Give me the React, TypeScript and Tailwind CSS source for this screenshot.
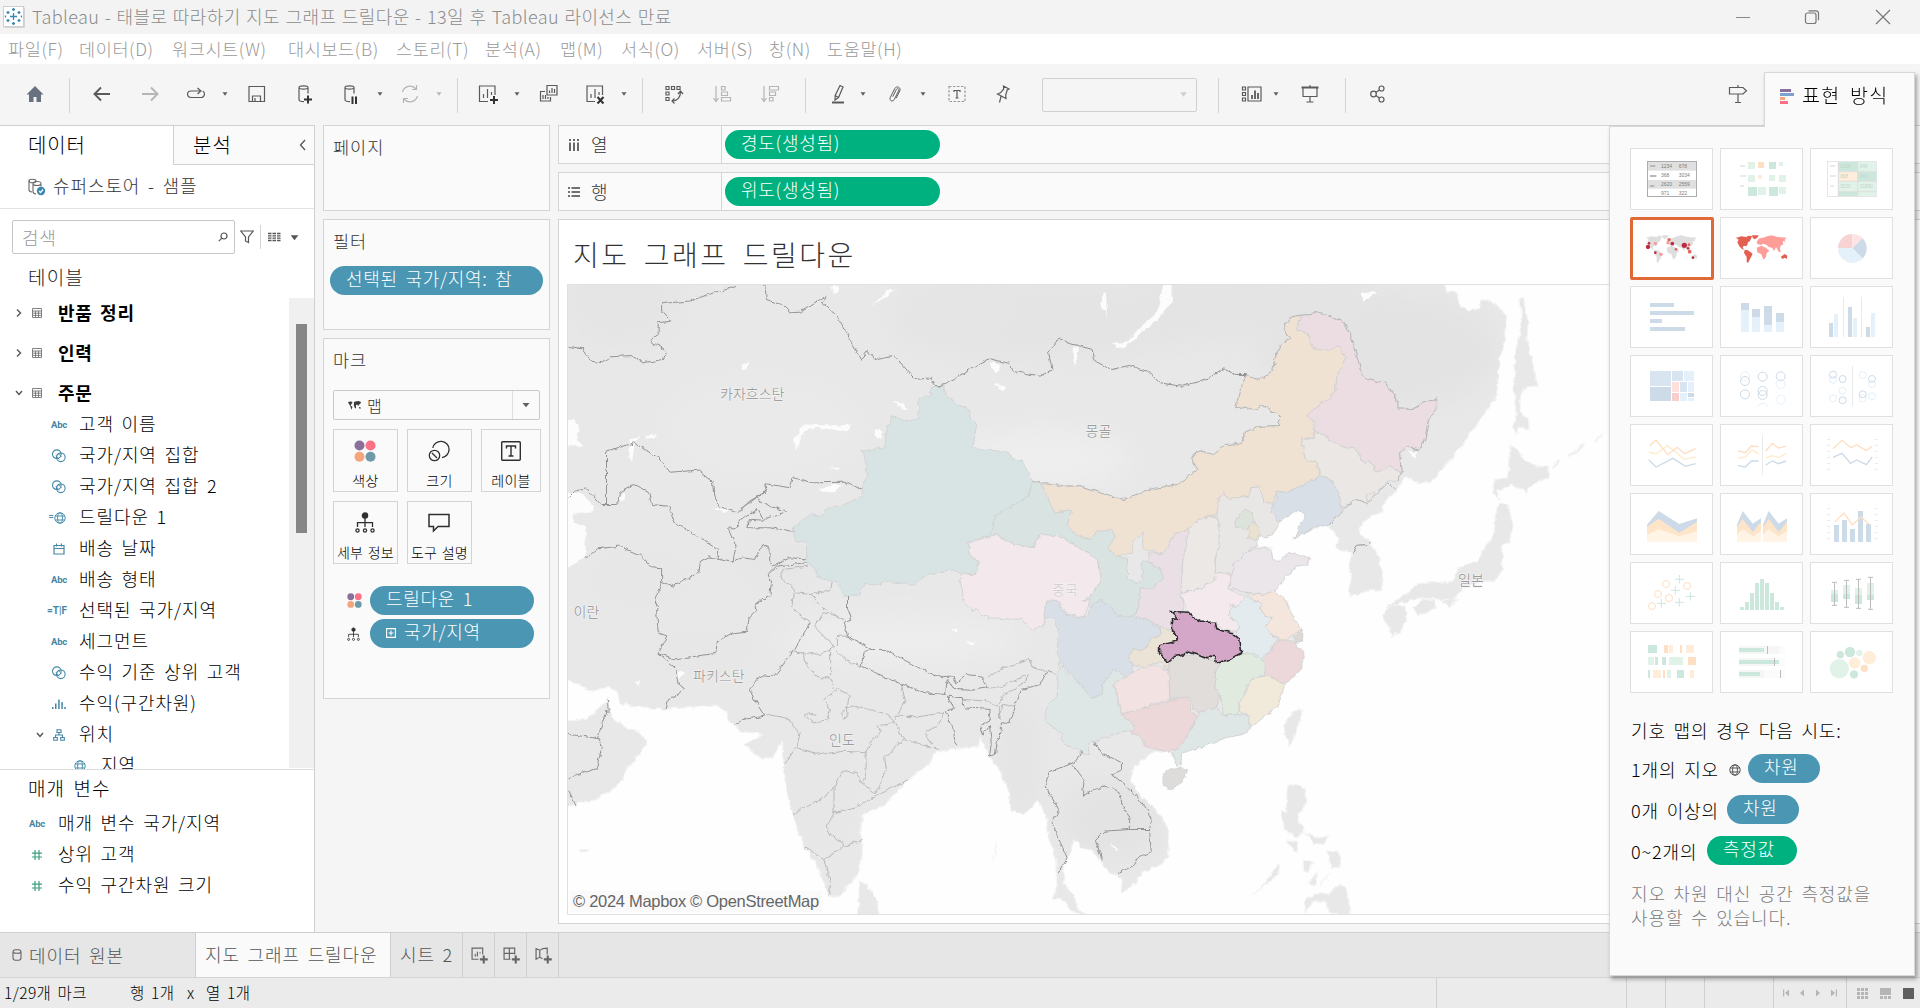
import React from "react";

/* ---------- Map geometry ---------- */

type Tile = "A" | "B" | "C" | "D";
const ORIGIN: Record<Tile, [number, number]> = {
  A: [560, 280],
  B: [1080, 280],
  C: [560, 600],
  D: [1080, 600],
};
const SX = 530 / 1568;
const SY = 1 / 3;

/* "A x,y x,y B x,y" -> point list in map pixels; a letter switches the survey tile. */
function pts(src: string): string {
  let tile: Tile = "A";
  const out: string[] = [];
  for (const tok of src.trim().split(/\s+/)) {
    if (tok in ORIGIN) {
      tile = tok as Tile;
    } else {
      const [x, y] = tok.split(",").map(Number);
      const [ox, oy] = ORIGIN[tile];
      out.push(`${(ox + x * SX).toFixed(1)},${(oy + y * SY).toFixed(1)}`);
    }
  }
  return out.join(" ");
}

const LAND = [
  "A 0,0 1568,0 B 1075,0 1085,35 1120,40 1120,75 1150,95 1180,85 1185,62 1215,62 1262,110 1255,190 1240,240 1235,330 1225,360 1170,440 1120,510 1080,560 1040,605 1005,613 960,590 935,635 900,665 895,695 840,725 828,745 830,765 860,790 885,840 895,880 892,930 850,935 800,950 793,930 803,900 795,860 803,820 755,805 765,780 735,738 700,745 650,765 632,778 645,745 665,710 655,695 632,697 590,730 570,765 545,775 525,770 527,800 565,803 570,840 590,843 620,820 680,835 675,855 640,860 605,895 575,935 605,955 620,985 D 630,50 658,95 655,125 630,140 665,155 655,205 600,255 595,290 585,320 540,355 500,390 480,405 430,415 395,430 340,450 300,465 300,495 285,500 275,475 270,458 215,458 185,480 160,500 148,545 170,580 200,610 245,655 260,690 262,770 240,795 185,820 165,850 125,878 125,840 95,825 70,800 55,775 35,752 0,745 C 1535,725 1515,725 1515,755 1490,790 1490,850 1520,885 1530,920 1560,960 1510,930 1480,900 1460,900 1470,850 1465,780 1445,710 1440,660 1415,600 1370,645 1335,635 1325,570 1300,510 1270,475 1245,415 1235,440 1165,450 1110,455 1095,490 1030,540 985,590 955,620 895,645 890,690 895,760 880,830 850,860 830,890 797,890 780,855 760,800 720,735 700,680 680,620 665,540 655,430 635,465 600,482 545,435 600,405 530,395 520,372 500,368 495,340 470,320 370,322 310,330 200,318 175,310 170,280 145,262 95,275 0,230",
  "C 0,365 80,360 120,320 143,295 150,350 190,385 235,395 255,430 215,490 190,510 190,540 150,570 110,600 50,612 0,630",
  "B 1297,60 1312,55 1315,80 1325,130 1322,180 1355,320 1320,320 1302,345 1302,395 1330,430 1330,455 1300,440 1288,465 1283,440 1292,390 1282,320 1288,210 1300,170 1305,90",
  "B 1275,495 1320,545 1350,562 1385,560 1388,595 1340,610 1320,640 1275,615 1250,630 1235,630 1240,660 1220,640 1225,600 1265,595 1270,560",
  "B 1240,672 1262,672 1282,740 1270,785 1250,800 1250,870 1225,905 1190,905 1140,915 1115,950 1090,985 1070,960 1010,955 985,960 940,975 905,988 910,978 975,935 1000,912 1065,908 1100,905 1120,865 1175,845 1200,800 1225,760 1228,700",
  "D 985,25 1010,0 1050,0 1050,25 1000,50",
  "D 1070,0 1115,0 1090,25",
  "D 900,35 930,12 965,25 965,60 945,100 920,112 915,85 900,60",
  "D 655,328 655,350 640,390 622,437 602,400 605,370 630,335",
  "D 612,560 640,555 668,565 665,590 673,605 650,640 643,665 665,685 660,700 640,715 615,700 600,680 595,630 610,640",
  "D 610,725 640,725 643,760 615,735",
  "D 665,700 710,715 735,710 720,735 690,730",
  "D 730,755 765,755 772,800 745,810",
  "D 660,780 690,790 675,815 660,815",
  "D 665,940 665,900 700,885 740,880 770,850 790,870 800,950 735,942 725,905 690,905",
  "D 675,850 700,820 695,860",
  "D 700,860 740,820 712,850",
  "D 515,882 545,850 585,795 590,820 555,850",
  "C 885,845 905,855 940,900 940,950 882,950",
  "C 1290,725 1290,750 1283,782",
  "C 55,750 85,750 85,756 60,757",
  "B 1395,560 1415,540 1420,543 1400,563",
  "B 1440,530 1490,493 1495,497 1447,532",
  "B 1520,485 1543,463 1545,466 1524,488",
];

const WATER = [
  "A 0,640 60,640 100,680 95,700 40,700 40,730 75,740 75,835 22,865 0,865",
  "A 0,420 45,422 55,440 50,480 65,500 0,500",
  "A 690,480 720,435 800,438 860,436 850,455 760,445 720,455 700,515",
  "A 765,627 835,612 810,638 790,638",
  "A 980,365 1010,372 1035,390 1020,390",
  "A 930,447 945,447 955,470 948,480 932,468",
  "A 1270,255 1285,245 1303,262 1285,280",
  "A 1520,200 1535,205 1525,258 1518,255",
  "A 1285,312 1318,322 1305,332",
  "A 205,480 240,472 220,490 213,545 205,535",
  "A 250,466 287,465 278,478 255,480",
  "A 170,655 190,640 195,655 180,668",
  "A 447,685 500,690 490,700",
  "A 535,255 560,245 548,270 538,270",
  "A 800,22 828,18 822,40 806,40",
  "A 922,80 970,30 990,32 950,60",
  "A 793,565 828,565 822,571",
  "B 250,0 275,0 270,70 230,120 165,175 125,207 90,195 140,185 180,140 225,105",
  "B 70,40 76,40 80,128 76,90 60,85",
  "B 830,40 878,38 850,60 840,66",
  "B 970,515 998,515 985,535",
  "C 1155,90 1180,88 1170,102",
  "C 1205,128 1230,126 1215,138",
  "C 350,212 372,220 352,235",
  "C 222,247 236,243 232,258",
  "D 90,728 112,750 105,752",
];

const PROVINCES: [string, string][] = [
  ["#d8e4e3", "A 1115,320 1135,322 1140,345 1170,372 1210,390 1218,420 1232,435 1222,500 1240,510 1310,515 1368,548 1398,605 1385,650 1325,685 1310,705 1290,705 1270,768 1205,790 1215,825 1240,850 1228,885 1150,872 1085,885 1050,915 970,905 945,918 900,912 880,950 840,950 825,912 765,895 745,855 715,850 730,835 728,790 695,785 690,745 740,705 780,712 785,688 830,680 893,650 895,620 910,590 898,520 885,515 960,505 965,460 980,412 1040,425 1060,415 1062,355 1095,345 1098,322"],
  ["#d8e3e2", "A 1398,605 1425,615 1445,660 1465,700 1515,690 1500,735 1545,775 B 30,780 50,755 95,752 103,770 85,810 110,830 140,835 140,895 165,912 187,900 178,845 200,845 240,870 243,900 215,925 178,925 172,985 D 155,50 110,50 90,20 60,0 B 40,990 5,965 35,945 62,900 55,850 20,815 0,808 A 1520,795 1470,768 1420,765 1395,805 1330,790 1290,765 1270,768 1290,705 1325,685 1385,650"],
  ["#f3e9ec", "A 1290,765 1330,790 1395,805 1420,765 1470,768 1520,795 B 0,808 20,815 55,850 62,900 35,945 5,965 C 1568,0 1550,55 1500,45 1475,5 1440,5 1430,80 1395,92 1365,60 1270,55 1210,25 1190,0 A 1195,960 1180,885 1228,885 1240,850 1215,825 1205,790"],
  ["#f0e2d3", "A 1425,615 B 0,620 60,640 130,660 200,630 290,615 345,570 330,540 345,512 395,525 430,495 475,492 490,455 540,440 590,438 590,410 540,378 515,390 485,382 460,385 470,340 490,288 530,302 570,275 575,235 600,190 620,175 600,145 625,112 655,108 640,150 670,160 690,210 740,212 765,200 785,235 760,290 755,330 735,360 680,395 675,410 690,430 690,475 655,475 665,540 700,550 710,590 670,610 610,640 580,635 572,672 545,668 530,622 505,625 500,650 440,660 425,640 410,655 405,705 350,720 320,750 280,765 245,825 185,808 185,760 160,785 155,820 105,830 85,805 103,770 95,752 50,755 25,778 0,768 A 1530,770 1500,735 1515,690 1465,700 1445,660"],
  ["#ecdde2", "B 655,108 705,98 750,115 780,130 800,165 835,290 850,300 900,310 930,345 940,388 985,390 1010,372 1055,358 1055,390 1030,420 1020,480 1003,512 965,502 945,520 950,580 915,562 880,578 850,540 840,552 815,510 760,495 720,465 690,455 700,435 675,410 680,395 735,360 755,330 760,290 785,235 765,200 740,212 690,210 670,160 640,150"],
  ["#ebe7e4", "B 655,475 690,478 695,460 720,465 760,495 815,510 840,552 850,540 880,578 915,562 950,582 940,605 910,605 880,640 850,645 850,670 815,660 775,688 765,640 740,600 710,585 700,548 665,540"],
  ["#d8dfe6", "B 580,635 610,640 670,610 715,590 745,605 765,640 775,688 735,738 700,742 650,765 632,778 645,745 665,710 655,695 632,697 592,728 562,692 580,665"],
  ["#e9e7e5", "B 410,655 425,640 440,660 500,650 505,625 530,622 545,668 572,672 562,692 592,728 570,765 545,772 530,765 525,795 490,818 455,855 450,885 400,878 400,840 412,790 405,705"],
  ["#dbe3da", "B 458,735 470,705 490,688 513,705 510,730 495,748 462,745"],
  ["#eae1cf", "B 500,745 515,722 528,755 520,787 500,775"],
  ["#ebe8e6", "B 320,750 350,720 400,710 412,740 410,800 398,840 402,900 360,925 298,943 303,850 312,800"],
  ["#e9dfe4", "B 320,750 312,800 303,850 298,943 305,985 D 305,30 300,40 268,36 290,58 270,60 270,95 235,80 200,60 160,50 B 172,985 178,925 215,925 243,900 240,870 200,845 205,820 245,825 280,765"],
  ["#f4e9ed", "B 298,943 360,925 402,900 400,878 450,885 440,925 470,945 490,955 460,985 D 455,10 440,50 470,70 465,95 430,92 400,68 355,68 320,36 305,10"],
  ["#ebe6ea", "B 450,885 455,855 490,818 530,803 565,812 570,840 590,843 620,820 680,835 675,855 640,860 605,895 575,935 540,948 510,940 485,938 440,925"],
  ["#f4e6dd", "B 485,938 540,948 575,932 605,955 618,990 D 630,50 658,95 640,95 610,122 585,118 560,100 550,80 570,55 540,45 530,15 515,0 B 505,950"],
  ["#e3ebef", "B 460,985 490,950 515,965 540,975 D 530,25 545,50 570,55 550,80 560,100 583,118 560,155 535,175 500,165 478,160 472,120 465,95 470,70 440,50 445,15"],
  ["#ecd8db", "D 583,122 630,125 650,145 660,155 655,205 610,252 580,245 545,225 537,185 560,155"],
  ["#ddd8d5", "D 630,110 655,92 655,125 640,128"],
  ["#e0eadf", "D 415,190 475,165 500,160 540,178 550,225 510,235 475,300 465,345 425,348 412,290 400,260 400,215"],
  ["#f1e9d9", "D 555,228 605,255 595,290 585,320 540,355 505,385 498,350 470,335 475,300 510,235"],
  ["#e1dddb", "D 262,190 300,168 345,168 395,185 415,195 400,215 400,260 412,290 405,325 350,340 335,330 325,292 265,300 262,230"],
  ["#ebe4d6", "D 235,80 270,95 290,108 285,125 235,138 235,160 262,190 258,215 245,190 215,190 195,205 155,195 142,172 155,150 190,150 210,120 240,105"],
  ["#d8dfe6", "C 1440,5 1475,5 1500,45 1550,55 D 20,50 40,10 60,0 90,20 110,50 155,50 200,62 235,85 240,105 210,120 190,150 155,150 142,172 160,215 165,235 130,230 100,215 70,250 65,285 35,297 C 1545,260 1490,200 1470,160 1475,100 1460,60 1430,50"],
  ["#dfe7e6", "C 1475,185 1490,210 1545,260 1568,290 D 35,297 65,285 70,250 100,210 135,230 130,250 95,255 110,285 118,340 165,370 160,395 130,395 60,420 25,430 25,465 0,460 C 1550,460 1490,430 1480,400 1435,365 1440,320 1470,290"],
  ["#f2e2e1", "D 95,255 160,215 220,195 262,215 265,300 220,310 150,345 118,340 110,285"],
  ["#ecd7d9", "D 118,345 190,325 220,315 320,290 328,335 345,350 325,400 290,445 262,458 190,440 180,410 150,400 162,378"],
  ["#dfe7e6", "D 345,350 350,338 405,325 425,348 465,345 498,350 500,390 480,405 430,415 395,430 340,450 300,465 298,495 285,500 275,460 290,445 325,400"],
  ["#dedbdb", "D 245,530 262,512 305,503 318,512 300,550 270,568 245,560"],
];

const HUBEI =
  "D 268,36 320,38 335,55 355,68 400,68 405,88 430,96 450,100 472,120 478,160 440,180 403,192 398,172 385,170 375,178 345,165 310,155 300,168 280,170 260,190 235,160 235,138 285,125 290,108 270,95 270,60 290,58";

const BORDERS = [
  "A 22,200 65,208 90,245 125,250 150,232 210,228 245,250 305,240 312,215 265,182 290,165 290,130 328,125 300,95 300,72 380,65 440,45 520,18",
  "A 605,12 610,60 655,75 680,100 710,98 790,50 775,70 820,110 890,240 910,215 935,240 990,230 1020,265 1050,300 1095,295 1115,320 1140,315 1210,270 1270,238 1330,252 1340,275 1420,290 1455,270 1445,220 1475,175 1500,190 1568,208 B 35,210 45,245 90,270 145,258 200,275 235,310 300,320 375,300 425,265 460,285 490,285",
  "A 137,675 137,515 218,490 290,535 325,578 410,572 450,605 455,650 470,682 525,700 560,665 610,635 580,655 620,680 670,695 600,720 585,690 540,715 520,745 495,745 520,800 510,850",
  "A 530,690 610,635 605,612 680,625 690,595 750,610 850,608 893,632",
  "A 600,725 560,722 555,745 620,745 690,755",
  "A 22,655 40,635 80,628 120,675 170,675 175,640 220,615 260,635 270,675 320,680 340,730 470,810 465,835",
  "A 75,838 110,808 175,800 240,828 270,862 300,865 300,905 335,920 410,880 415,845 440,832 510,845 540,835 575,840 600,795 620,810 625,862 680,835 730,838",
  "A 300,905 280,960 290,990 C 285,30 290,100 318,110 290,162 345,210 352,255 365,265 345,290 320,300 313,330",
  "C 290,162 340,178 460,162 465,125 510,100 550,95 555,60 580,35 575,12 608,0 A 575,970 620,945 625,910 615,885 640,860 730,850",
  "C 740,70 715,110 690,155 660,195 630,232 590,228 560,270 580,310 605,350 540,360 518,375",
  "A 850,950 850,985 C 862,60 840,65 850,110 890,130 920,150 960,150 1080,215 1130,235 1165,232 1170,250 1200,225 1250,230 1263,265 1220,272 1165,270 1145,240 1140,285 1080,280 1000,250 890,200 900,155 920,150",
  "C 1145,290 1165,325 1140,340 1160,380 1170,437",
  "C 1145,290 1190,295 1195,325 1275,330 1270,365 1240,380 1250,405 1270,375 1275,430 1270,470 1285,465 1290,430 1305,400 1305,370 1330,372 1350,310 1365,270 1420,255 1440,215 1465,225",
  "C 1545,455 1530,485 1445,520 1435,560 1475,630 1455,670 1480,730 1500,775 1472,820",
  "C 1515,495 1550,540 1545,590 D 40,570 80,560 115,580 125,620 147,655 145,690 205,690",
  "D 40,428 65,460 100,480 125,490 125,510 95,525 160,580 205,640 210,665 205,690 210,755 170,775 155,800 110,822",
  "D 145,690 70,695 45,720 65,782",
  "C 22,400 30,405 110,417 125,440 107,507 22,535",
  "C 110,417 125,370 135,335 145,340 143,297",
  "C 22,565 47,620",
  "B 805,822 820,797 855,795 858,787",
];

const SOFT_BORDERS = [
  "A 1398,605 1430,612 1500,620 B 0,618 60,640 130,660 200,630 290,615 345,570 330,540 345,512 395,525 430,495 475,492 490,455 540,440 590,438 590,410 540,378 515,390 485,382 460,385 470,340 490,288 530,302 570,275 575,235 600,190 620,175 600,145 625,112 705,98 750,115 780,130 800,165 835,290 850,300 900,310 930,345 940,388 985,390 1010,372 1055,358",
  "B 1055,390 1030,420 1020,480 1003,512 965,502 945,520 950,580 940,605",
  "B 735,738 780,690 815,660 850,670 880,640 910,610 930,630",
  "A 730,860 660,870 650,890 690,925 700,940 740,945 800,930 805,910",
  "A 690,940 685,985 C 700,40 740,70",
  "A 740,945 785,990 C 830,55",
  "C 680,157 770,165 810,140 750,80 780,40 840,60",
  "C 715,160 730,200 765,235 800,235 810,265 855,285 850,320 915,330 970,345 990,365 995,350 1060,352 1135,340",
  "C 800,145 800,230",
  "C 820,140 820,110 850,110",
  "C 815,150 850,185 890,200",
  "C 820,270 780,300 800,330 790,360 750,370 725,350 735,340 755,345",
  "C 850,320 833,340 835,360 852,355 850,320",
  "C 610,345 670,355 710,400 700,440 660,500",
  "C 700,445 770,465 840,455 905,460 915,430 950,395 940,378 970,375 990,365 1015,420 1000,435 960,475 965,510 945,560 930,582 890,548 880,520 835,512 810,560 810,640 880,620 935,590 1030,540",
  "C 905,460 905,520 895,550",
  "C 690,650 710,630 780,595 810,560",
  "C 810,640 790,680 800,705 840,735 820,755 780,780 725,745",
  "C 840,740 895,720",
  "C 780,780 800,850 797,890",
  "C 1015,420 1070,435 1120,450",
  "C 1135,340 1120,375 1080,400 1100,435",
  "C 1000,345 1020,300 1010,255",
  "C 1195,300 1270,305 1290,320 1320,280 1380,245 1385,225 1300,265 1263,265",
  "C 1263,235 1310,205 1390,180 1400,205 1435,215",
  "C 1300,320 1300,360 1310,315 1345,320",
];

const SHADES: [number, number, number, number, string][] = [
  [620, 300, 60, 50, "#e5e5e5"],
  [1050, 320, 160, 40, "#e4e4e4"],
  [960, 310, 60, 30, "#e5e5e5"],
  [1380, 350, 120, 60, "#e3e3e3"],
  [1250, 300, 120, 40, "#e4e4e4"],
  [760, 430, 100, 50, "#eaeaea"],
  [1040, 460, 90, 30, "#eeeeee"],
  [900, 640, 120, 25, "#ededed"],
  [640, 580, 60, 30, "#e7e7e7"],
  [700, 650, 60, 24, "#e7e7e7"],
  [820, 800, 40, 60, "#e7e7e7"],
  [1020, 760, 14, 60, "#e3e3e3"],
  [1110, 820, 50, 40, "#e3e3e3"],
  [780, 560, 40, 20, "#e5e5e5"],
];

const PLACES: [string, number, number, string][] = [
  ["카자흐스탄", 719, 398.5, "#8f8f8f"],
  ["몽골", 1084.5, 435.5, "#8f8f8f"],
  ["중국", 1051, 594.5, "#d6ccd0"],
  ["이란", 572.5, 616.5, "#8f8f8f"],
  ["파키스탄", 692, 680.5, "#8f8f8f"],
  ["인도", 828, 744.5, "#8f8f8f"],
  ["일본", 1457, 584.5, "#8f8f8f"],
];

function MapView() {
  return (
    <svg className="block h-[629px] w-[1043px]" viewBox="567 285 1043 629">
      <defs>
        <filter id="rough" x="0" y="0" width="100%" height="100%">
          <feTurbulence type="fractalNoise" baseFrequency="0.16" numOctaves="2" seed="4" result="n" />
          <feDisplacementMap in="SourceGraphic" in2="n" scale="5" xChannelSelector="R" yChannelSelector="G" />
        </filter>
        <filter id="soft" x="-50%" y="-50%" width="200%" height="200%">
          <feGaussianBlur stdDeviation="14" />
        </filter>
        <clipPath id="land">
          <polygon points={pts(LAND[0])} />
        </clipPath>
      </defs>
      <rect x="567" y="285" width="1043" height="629" fill="#fefefe" />
      <g filter="url(#rough)" transform="translate(-0.8 -0.5)" colorInterpolationFilters="sRGB">
        {LAND.map((d, i) => (
          <polygon key={i} points={pts(d)} fill="#e8e8e8" stroke="#f4f4f4" strokeWidth="1.2" />
        ))}
        <g clipPath="url(#land)">
          {SHADES.map(([x, y, rx, ry, c], i) => (
            <ellipse key={i} cx={x} cy={y} rx={rx} ry={ry} fill={c} filter="url(#soft)" />
          ))}
        </g>
        {WATER.map((d, i) => (
          <polygon key={i} points={pts(d)} fill="#fcfcfc" />
        ))}
        {PROVINCES.map(([c, d], i) => (
          <polygon key={i} points={pts(d)} fill={c} stroke="#cfcfcf" strokeWidth="0.8" />
        ))}
        <g fill="none" strokeLinejoin="round">
          {SOFT_BORDERS.map((d, i) => (
            <polyline key={i} points={pts(d)} stroke="#b3b3b3" strokeWidth="0.9" />
          ))}
          {BORDERS.map((d, i) => (
            <polyline key={i} points={pts(d)} stroke="#939393" strokeWidth="1" />
          ))}
        </g>
        <polygon points={pts(HUBEI)} fill="#d4a6c8" stroke="#2b2b2b" strokeWidth="1.6" />
      </g>
      <g className="font-['Noto_Sans_CJK_KR',sans-serif] text-[14px] font-light">
        {PLACES.map(([t, x, y, c]) => (
          <text key={t} x={x} y={y} fill={c} stroke="#f2f2f2" strokeWidth="1.5" paintOrder="stroke">
            {t}
          </text>
        ))}
      </g>
    </svg>
  );
}

/* ---------- Small icons ---------- */

function Ico({ children, className = "" }: { children: React.ReactNode; className?: string }) {
  return (
    <svg
      viewBox="0 0 24 24"
      className={"h-6 w-6 shrink-0 " + className}
      fill="none"
      stroke="#5a5a5a"
      strokeWidth="1.2"
    >
      {children}
    </svg>
  );
}

function Caret({ className = "", fill = "#5f5f5f" }: { className?: string; fill?: string }) {
  return (
    <svg viewBox="0 0 8 8" className={"h-2 w-2 shrink-0 " + className}>
      <path d="M1.5 2.3h5L4 5.8z" fill={fill} />
    </svg>
  );
}

function Sep({ className = "" }: { className?: string }) {
  return <div className={"mt-[3px] h-[35px] w-px shrink-0 bg-[#d4d4d4] " + className} />;
}

function Globe({ color = "#4c8fae", size = "h-3 w-3" }: { color?: string; size?: string }) {
  return (
    <svg viewBox="0 0 12 12" className={size} fill="none" stroke={color} strokeWidth="1">
      <circle cx="6" cy="6" r="5.2" />
      <ellipse cx="6" cy="6" rx="2.4" ry="5.2" />
      <path d="M1.3 4h9.4M1.3 8h9.4" />
    </svg>
  );
}

function Dots({ className }: { className: string }) {
  return (
    <svg viewBox="0 0 22 22" className={className}>
      <circle cx="5.5" cy="5.5" r="5" fill="#8a6f9a" />
      <circle cx="16.5" cy="5.5" r="5" fill="#fb7185" />
      <circle cx="5.5" cy="16.8" r="5" fill="#f4a57c" />
      <circle cx="16.5" cy="16.8" r="5" fill="#6d9aa8" />
    </svg>
  );
}

function DetailTree({ className }: { className: string }) {
  return (
    <svg viewBox="0 0 20 22" className={className} fill="none" stroke="#2f2f2f" strokeWidth="1.3">
      <circle cx="10" cy="3.5" r="2.6" fill="#2f2f2f" />
      <path d="M10 6v9M2.5 15v-4.3h15V15" />
      <circle cx="2.5" cy="18.5" r="1.6" />
      <circle cx="10" cy="18.5" r="1.6" />
      <circle cx="17.5" cy="18.5" r="1.6" />
    </svg>
  );
}

function Rings() {
  return (
    <svg viewBox="0 0 16 14" className="h-[14px] w-4" fill="none" stroke="#4488a6" strokeWidth="1.1">
      <circle cx="5.8" cy="5.2" r="4.3" />
      <circle cx="9.8" cy="8.3" r="4.3" />
      <path d="M5 6.5l3 4M7.5 4l3 4" strokeWidth="0.8" />
    </svg>
  );
}

type Kind = "abc" | "set" | "geo" | "date" | "tf" | "bin" | "hier" | "globe" | "num";

function FieldIcon({ kind }: { kind: Kind }) {
  switch (kind) {
    case "abc":
      return <span className="font-['Roboto',sans-serif] text-[9.5px] font-bold leading-none tracking-tight text-[#4785a3]">Abc</span>;
    case "set":
      return <Rings />;
    case "geo":
      return (
        <span className="-ml-1 flex items-center">
          <span className="font-['Roboto',sans-serif] text-[9px] font-bold leading-none text-[#4785a3]">=</span>
          <Globe />
        </span>
      );
    case "date":
      return (
        <svg viewBox="0 0 12 12" className="h-3 w-3" fill="none" stroke="#4488a6" strokeWidth="1.2">
          <path d="M1 2.5h10v8.5H1zM1 5.5h10M3.5 0.5v3M8.5 0.5v3" />
        </svg>
      );
    case "tf":
      return <span className="-ml-1 font-['Roboto',sans-serif] text-[10px] font-bold leading-none text-[#4785a3]">=T|F</span>;
    case "bin":
      return (
        <svg viewBox="0 0 14 10" className="h-[10px] w-[14px]" fill="#4488a6">
          <path d="M0 8h1.5v2H0zM3 4.5h1.5V10H3zM6.2 0.5h1.5V10H6.2zM9.3 3h1.5v7H9.3zM12.3 8h1.5v2h-1.5z" />
        </svg>
      );
    case "hier":
      return (
        <svg viewBox="0 0 12 12" className="h-3 w-3" fill="none" stroke="#4488a6" strokeWidth="1.1">
          <path d="M4 0.7h4v2.8H4zM0.7 8.5h3.6v2.8H0.7zM7.7 8.5h3.6v2.8H7.7zM6 3.5V6M2.5 8.5V6h7v2.5" />
        </svg>
      );
    case "globe":
      return <Globe />;
    case "num":
      return (
        <svg viewBox="0 0 12 12" className="h-3 w-3" stroke="#3f9f7b" strokeWidth="1.2">
          <path d="M4 1v10M8 1v10M1 4.2h10M1 8h10" />
        </svg>
      );
  }
}

/* ---------- Left pane ---------- */

const TXT = "text-[18px] leading-none tracking-[0.9px] [word-spacing:2.8px]";
const ROW_TXT = "pb-[3px] " + TXT;

const FIELDS: [Kind, string][] = [
  ["abc", "고객 이름"],
  ["set", "국가/지역 집합"],
  ["set", "국가/지역 집합 2"],
  ["geo", "드릴다운 1"],
  ["date", "배송 날짜"],
  ["abc", "배송 형태"],
  ["tf", "선택된 국가/지역"],
  ["abc", "세그먼트"],
  ["set", "수익 기준 상위 고객"],
  ["bin", "수익(구간차원)"],
];

function Chevron({ open = false }: { open?: boolean }) {
  return (
    <svg viewBox="0 0 10 10" className="h-[10px] w-[10px]" fill="none" stroke="#555" strokeWidth="1.4">
      <path d={open ? "M2 3l3 3.5 3-3.5" : "M3 1.5l3.5 3.5L3 8.5"} />
    </svg>
  );
}

function TableRow({ name, open = false, className }: { name: string; open?: boolean; className: string }) {
  return (
    <div className={"flex shrink-0 items-center " + className}>
      <div className="flex w-[32px] justify-center pl-[6px]">
        <Chevron open={open} />
      </div>
      <svg viewBox="0 0 10 10" className="h-[10px] w-[10px]" fill="none" stroke="#666" strokeWidth="0.8">
        <path d="M0.5 0.5h9v9h-9zM0.5 3h9M0.5 5.2h9M0.5 7.4h9M3.5 3v6.5M6.5 3v6.5" />
      </svg>
      <span className="ml-[16px] pb-[2px] text-[18px] font-bold leading-none tracking-[0.8px] text-black [word-spacing:2.5px]">{name}</span>
    </div>
  );
}

function LeftPane() {
  return (
    <aside className="flex h-[807px] w-[315px] shrink-0 flex-col border-r border-t border-[#d0d0d0] bg-white">
      <div className="flex h-[39px] shrink-0">
        <div className="flex w-[173px] items-center pb-[2px] pl-7 text-[20px] tracking-[0.8px] text-black">데이터</div>
        <div className="flex flex-1 items-center border-b border-l border-[#d0d0d0] bg-[#fafafa] pb-px pl-[19px] pr-[7px] text-[20px] tracking-[1.2px] text-black">
          분석
          <svg viewBox="0 0 8 12" className="ml-auto h-3 w-2" fill="none" stroke="#555" strokeWidth="1.3">
            <path d="M6 1L1.5 6 6 11" />
          </svg>
        </div>
      </div>
      <div className="flex h-[44px] shrink-0 items-center border-b border-[#e2e2e2] pl-7">
        <svg viewBox="0 0 18 18" className="h-[18px] w-[18px]" fill="none" stroke="#666" strokeWidth="1.1">
          <ellipse cx="4.5" cy="3" rx="3.5" ry="1.8" />
          <path d="M1 3v9c0 1 1 1.8 3 2M5 5.5c0-1.2 1.600-2 4-2s4 .8 4 2-1.600 2-4 2-4-.8-4-2zM5 5.500v8c0 1.500 1.500 2.300 3 2.500M13 5.500v3" />
          <circle cx="13" cy="13" r="4.2" fill="#3a87ad" stroke="none" />
          <path d="M11 13l1.5 1.5 2.600-3" stroke="#fff" strokeWidth="1.2" />
        </svg>
        <span className={"ml-[7px] text-[#333] " + ROW_TXT}>슈퍼스토어 - 샘플</span>
      </div>
      <div className="mt-[11px] flex h-[34px] shrink-0 items-center pl-3">
        <div className="flex h-[34px] w-[223px] items-center rounded-[2px] border border-[#c6c6c6] px-[9px]">
          <span className="pb-px text-[18px] leading-none tracking-[0.8px] text-[#9a9a9a]">검색</span>
          <svg viewBox="0 0 10 10" className="ml-auto mr-[-3px] h-[10px] w-[10px]" fill="none" stroke="#555" strokeWidth="1.2">
            <circle cx="6" cy="4" r="3" />
            <path d="M3.8 6.2L0.8 9.2" />
          </svg>
        </div>
        <svg viewBox="0 0 14 14" className="ml-[5px] h-[14px] w-[14px]" fill="none" stroke="#555" strokeWidth="1.2">
          <path d="M0.8 1h12.4L8.5 7v5.5l-3-1.500V7z" />
        </svg>
        <div className="ml-[6px] h-6 w-px bg-[#d4d4d4]" />
        <svg viewBox="0 0 13 10" className="ml-[7px] h-[10px] w-[13px]" stroke="#555" strokeWidth="1.3">
          <path d="M0 1.5h13M0 3.8h13M0 6.2h13M0 8.5h13" strokeDasharray="3.5 1" />
        </svg>
        <svg viewBox="0 0 8 8" className="ml-[8px] h-[11px] w-[11px]">
          <path d="M1.2 2.3h5.600L4 6z" fill="#555" />
        </svg>
      </div>
      <div className="mt-[13px] pl-7 text-[19px] leading-[20px] tracking-[1.2px] text-[#1d1d1d]">테이블</div>
      <div className="mt-[6px] flex h-[477px] shrink-0 border-b border-[#dcdcdc]">
        <div className="flex h-[476px] w-[289px] flex-col overflow-hidden">
          <TableRow name="반품 정리" className="h-[40px]" />
          <TableRow name="인력" className="h-[40px]" />
          <TableRow name="주문" open className="h-[36px] pt-[4px]" />
          {FIELDS.map(([k, name]) => (
            <div key={name} className="flex h-[31px] shrink-0 items-center">
              <div className="ml-[44px] flex w-[30px] justify-center">
                <FieldIcon kind={k} />
              </div>
              <span className={"ml-[5px] whitespace-nowrap text-black " + ROW_TXT}>{name}</span>
            </div>
          ))}
          <div className="flex h-[31px] shrink-0 items-center pl-[35px]">
            <Chevron open />
            <div className="flex w-[27px] justify-center">
              <FieldIcon kind="hier" />
            </div>
            <span className={"ml-[7px] text-black " + ROW_TXT}>위치</span>
          </div>
          <div className="flex h-[31px] shrink-0 items-center pl-[74px]">
            <FieldIcon kind="globe" />
            <span className={"ml-[15px] text-black " + ROW_TXT}>지역</span>
          </div>
        </div>
        <div className="mt-[5px] h-[470px] flex-1 bg-[#f0f0f0] pl-[7px] pt-[26px]">
          <div className="h-[209px] w-[11px] bg-[#868686]" />
        </div>
      </div>
      <div className="mt-[7px] pl-7 text-[19px] leading-[22px] tracking-[1.1px] text-black [word-spacing:3px]">매개 변수</div>
      <div className="mt-[9px]">
        {(
          [
            ["abc", "매개 변수 국가/지역"],
            ["num", "상위 고객"],
            ["num", "수익 구간차원 크기"],
          ] as [Kind, string][]
        ).map(([k, name]) => (
          <div key={name} className="flex h-[31px] items-center">
            <div className="ml-[22px] flex w-[30px] justify-center">
              <FieldIcon kind={k} />
            </div>
            <span className={"ml-[6px] text-black " + ROW_TXT}>{name}</span>
          </div>
        ))}
      </div>
    </aside>
  );
}

/* ---------- Cards ---------- */

function Pill({ children, className = "" }: { children: React.ReactNode; className?: string }) {
  return (
    <div
      className={
        "flex h-[29px] items-center whitespace-nowrap rounded-full pb-[6px] text-[18px] leading-none tracking-[0.7px] text-white [word-spacing:3px] " +
        className
      }
    >
      {children}
    </div>
  );
}

function MarkButton({ label, children, className = "w-[65px]" }: { label: string; children: React.ReactNode; className?: string }) {
  return (
    <div className={"flex h-[63px] flex-col items-center border border-[#d4d4d4] " + className}>
      <div className="flex h-[42px] items-center justify-center pr-px">{children}</div>
      <span className="whitespace-nowrap text-[14px] leading-[16px] tracking-[0.3px] text-black [word-spacing:1px]">{label}</span>
    </div>
  );
}

const CARD_TITLE = "text-[17.5px] leading-[20px] tracking-[1px] text-[#333]";

function Cards() {
  return (
    <div className="ml-2 flex w-[227px] shrink-0 flex-col gap-2">
      <div className={"h-[86px] border border-[#d4d4d4] bg-[#fafafa] pl-[9px] pt-[11px] " + CARD_TITLE}>페이지</div>
      <div className="h-[111px] border border-[#d4d4d4] bg-[#fafafa] pt-[11px]">
        <div className={"pl-[9px] " + CARD_TITLE}>필터</div>
        <Pill className="ml-[6px] mt-[15px] w-[213px] bg-[#4a96b3] pl-[16px]">선택된 국가/지역: 참</Pill>
      </div>
      <div className="h-[361px] border border-[#d4d4d4] bg-[#fafafa] pl-[9px] pt-[11px]">
        <div className={CARD_TITLE}>마크</div>
        <div className="mt-[20px] flex h-[30px] w-[207px] items-center rounded-[2px] border border-[#c9c9c9]">
          <svg viewBox="0 0 13 9" className="ml-[14px] h-[9px] w-[13px]" fill="#3a3a3a">
            <path d="M0 1l3-.6 1.600.6L3.500 3 2.500 4.200 4.500 6 3.300 8.700 2.500 5.500 1 3zM6 1l1.500-.6 3-.3L13 1l-.8 2-1.200.5L10.500 5 9 3.500 8 4v3L7 7.500 5.800 4zM11 6l1.500.2.200 1.500-1.500-.3z" />
          </svg>
          <span className="ml-[6px] pb-px text-[16px] leading-none text-[#333]">맵</span>
          <div className="ml-auto flex h-full w-[27px] items-center justify-center border-l border-[#dedede]">
            <svg viewBox="0 0 8 8" className="h-[10px] w-[10px]">
              <path d="M1.2 2.3h5.600L4 5.800z" fill="#5f5f5f" />
            </svg>
          </div>
        </div>
        <div className="mt-[9px] flex gap-[9px]">
          <MarkButton label="색상">
            <Dots className="h-[22px] w-[22px]" />
          </MarkButton>
          <MarkButton label="크기">
            <svg viewBox="0 0 22 22" className="h-[22px] w-[22px]" fill="none" stroke="#2f2f2f" strokeWidth="1.3">
              <path d="M4.8 8A8.2 8.2 0 1 1 14 17.6" />
              <circle cx="6.5" cy="15.5" r="5.2" />
              <path d="M4 13l5 5" />
            </svg>
          </MarkButton>
          <MarkButton label="레이블" className="w-[60px]">
            <svg viewBox="0 0 20 20" className="h-[20px] w-[20px]" fill="none" stroke="#2f2f2f" strokeWidth="1.4">
              <rect x="0.7" y="0.7" width="18.6" height="18.6" rx="1" />
              <path d="M5.5 7.5v-2.500h9v2.500M10 5v10M7.500 15h5" />
            </svg>
          </MarkButton>
        </div>
        <div className="mt-[9px] flex gap-[9px]">
          <MarkButton label="세부 정보">
            <DetailTree className="h-[22px] w-[20px]" />
          </MarkButton>
          <MarkButton label="도구 설명">
            <svg viewBox="0 0 22 20" className="h-[20px] w-[22px]" fill="none" stroke="#2f2f2f" strokeWidth="1.5">
              <path d="M1 1.5h20v12H10l-4.500 4.500v-4.500H1z" />
            </svg>
          </MarkButton>
        </div>
        <div className="mt-[22px] flex items-center">
          <div className="flex w-[37px] justify-center pl-[5px]">
            <Dots className="h-[15px] w-[15px]" />
          </div>
          <Pill className="w-[164px] bg-[#4a96b3] pl-[16px]">드릴다운 1</Pill>
        </div>
        <div className="mt-[4px] flex items-center">
          <div className="flex w-[37px] justify-center pl-[4px] pt-px">
            <DetailTree className="h-[15px] w-[13px]" />
          </div>
          <Pill className="w-[164px] bg-[#4a96b3] pl-[16px]">
            <svg viewBox="0 0 10 10" className="mr-2 mt-[5px] h-[10px] w-[10px]" fill="none" stroke="#fff" strokeWidth="1.1">
              <path d="M0.6 0.6h8.8v8.8H0.6zM5 2.500v5M2.500 5h5" />
            </svg>
            국가/지역
          </Pill>
        </div>
      </div>
    </div>
  );
}

function Shelf({ label, pill, icon }: { label: string; pill: string; icon: React.ReactNode }) {
  return (
    <div className="flex h-[39px] items-center border border-r-0 border-[#d4d4d4] bg-[#fafafa]">
      <div className="flex h-full w-[163px] items-center border-r border-[#d4d4d4] pl-[9px]">
        {icon}
        <span className="ml-[11px] pb-[2px] text-[18px] leading-none text-[#333]">{label}</span>
      </div>
      <Pill className="ml-[3px] w-[215px] bg-[#00b180] pl-[16px]">{pill}</Pill>
    </div>
  );
}

/* ---------- Show Me panel ---------- */

const R = (x: number, y: number, w: number, h: number, f: string) => (
  <rect key={`${x}-${y}`} x={x} y={y} width={w} height={h} fill={f} />
);

const BLUE = "#cddae7";
const PALE = "#e4f1fb";
const MINT = "#cce7db";
const LMINT = "#e1f3e9";
const PEACH = "#fddfc3";
const LPEACH = "#ffecd9";

function Thumb({ box, selected = false, children }: { box: string; selected?: boolean; children: React.ReactNode }) {
  return (
    <div
      className={
        selected
          ? "h-[63px] w-[84px] rounded-[2px] border-[3px] border-[#e06a35] bg-white"
          : "h-[62px] w-[83px] border border-[#e0e0e0] bg-white"
      }
    >
      <svg viewBox={box} className={selected ? "-m-[3px] h-[62px] w-[83px]" : "-m-px h-[62px] w-[83px]"} fill="none">
        {children}
      </svg>
    </div>
  );
}

const WORLD_W = "M0 8 10 6 14 4 32 6 36 2 48 3 46 8 42 18 36 22 34 30 30 34 24 32 20 36 24 44 18 42 10 34 4 22 8 14Z M48 1 68 1 64 8 56 13 50 8Z M26 44 36 46 50 56 44 68 36 84 32 80 32 66 24 54Z";
const WORLD_E = "M64 27 62 20 70 10 82 8 94 4 106 1 124 6 152 8 146 14 148 20 140 18 142 28 134 32 132 40 134 52 128 50 120 36 114 48 108 38 98 36 92 30 82 26 74 30Z M62 38 76 32 90 38 100 48 92 54 90 66 82 74 76 58 64 52Z";
const WORLD_A = "M134 66 146 57 154 62 152 72 146 68 140 72Z";

function ShowMeGrid() {
  const circles = (list: number[][]) =>
    list.map(([x, y, p], i) => <circle key={i} cx={x} cy={y} r="13.500" stroke={p ? PALE : BLUE} strokeWidth="3" />);
  const smallCircles = (list: number[][]) =>
    list.map(([x, y, p], i) => <circle key={i} cx={x} cy={y} r="10.500" stroke={p ? PALE : BLUE} strokeWidth="3" />);
  return (
    <div className="grid grid-cols-[83px_83px_83px] gap-x-[7px] gap-y-[7px] [grid-auto-rows:62px]">
      <Thumb box="690 264 249 186">
        {R(742, 304, 148, 106, "#fff")}
        {R(742, 304, 148, 28, "#e0e0e0")}
        {R(742, 360, 148, 26, "#e0e0e0")}
        <rect x="742.5" y="304.5" width="147" height="105" stroke="#ababab" strokeWidth="3" />
        {R(750, 315, 16, 6, "#b8b8b8")}
        {R(750, 345, 19, 6, "#b8b8b8")}
        {R(750, 375, 13, 6, "#b8b8b8")}
        <g className="font-['Liberation_Sans',sans-serif] text-[15px]" fill="#7d7d7d">
          <text x="783" y="325">1234</text>
          <text x="836" y="325">678</text>
          <text x="783" y="352">368</text>
          <text x="836" y="352">3034</text>
          <text x="783" y="379">2620</text>
          <text x="836" y="379">2559</text>
          <text x="783" y="404">971</text>
          <text x="836" y="404">322</text>
        </g>
      </Thumb>
      <Thumb box="960 264 249 186">
        {R(1020, 315, 15, 6, "#eaeaea")}
        {R(1020, 345, 18, 6, "#eaeaea")}
        {R(1020, 375, 12, 6, "#eaeaea")}
        {R(1044, 306, 21, 21, LMINT)}
        {R(1074, 306, 18, 18, PEACH)}
        {R(1107, 306, 21, 21, MINT)}
        {R(1137, 306, 12, 12, LMINT)}
        {R(1044, 345, 21, 21, LMINT)}
        {R(1074, 345, 12, 12, LPEACH)}
        {R(1107, 345, 18, 18, LMINT)}
        {R(1137, 345, 21, 21, LMINT)}
        {R(1044, 381, 27, 27, MINT)}
        {R(1074, 381, 24, 24, LMINT)}
        {R(1107, 381, 27, 27, MINT)}
        {R(1137, 381, 21, 21, LMINT)}
      </Thumb>
      <Thumb box="1230 264 249 186">
        <rect x="1282.5" y="304.5" width="147" height="105" stroke="#e6e6e6" strokeWidth="3" />
        {R(1315, 306, 57, 28, MINT)}
        {R(1373, 306, 56, 28, LMINT)}
        {R(1315, 336, 57, 27, LPEACH)}
        {R(1373, 336, 56, 27, MINT)}
        {R(1315, 366, 57, 28, LMINT)}
        {R(1373, 366, 56, 28, LMINT)}
        {R(1315, 396, 57, 12, MINT)}
        {R(1373, 396, 56, 12, LMINT)}
        <path d="M1315 306v102M1373 306v102M1315 335h115M1315 364h115M1315 395h115" stroke="#d3d8d5" strokeWidth="2.5" />
        {R(1290, 315, 15, 6, "#eaeaea")}
        {R(1290, 345, 18, 6, "#eaeaea")}
        {R(1290, 375, 12, 6, "#eaeaea")}
        <g className="font-['Liberation_Sans',sans-serif] text-[14px]" fill="#c3d3ca">
          <text x="1320" y="323">1234</text>
          <text x="1379" y="323">546</text>
          <text x="1320" y="354">368</text>
          <text x="1379" y="354">340</text>
          <text x="1320" y="384">2620</text>
          <text x="1379" y="384">51890</text>
        </g>
      </Thumb>
      <Thumb box="690 471 249 186" selected>
        <g transform="translate(738 525)">
          <path d={WORLD_W + WORLD_E + WORLD_A} fill="#dedede" />
          <circle cx="6" cy="36" r="6.5" fill="#bf2a43" />
          <circle cx="9" cy="25" r="4" fill="#bf2a43" />
          <circle cx="28" cy="25" r="5" fill="#fb9a99" />
          <circle cx="28" cy="53" r="4" fill="#bf2a43" />
          <circle cx="45" cy="58" r="5" fill="#fb9a99" />
          <circle cx="69" cy="14" r="5" fill="#e4655a" />
          <circle cx="66" cy="23" r="5" fill="#fb9a99" />
          <circle cx="79" cy="26" r="5.5" fill="#bf2a43" />
          <circle cx="90" cy="43" r="4" fill="#e4655a" />
          <circle cx="115" cy="31" r="8" fill="#bf2a43" />
          <circle cx="129" cy="29" r="4" fill="#e4655a" />
          <circle cx="126" cy="40" r="4" fill="#bf2a43" />
          <circle cx="131" cy="50" r="5.5" fill="#e4655a" />
          <circle cx="141" cy="68" r="4" fill="#bf2a43" />
        </g>
      </Thumb>
      <Thumb box="960 471 249 186">
        <g transform="translate(1008 525)">
          <path d={WORLD_W + WORLD_A} fill="#e35f52" />
          <path d={WORLD_E} fill="#ff9d98" />
        </g>
      </Thumb>
      <Thumb box="1230 471 249 186">
        <path d="M1357 565V522a43 43 0 0 0-43 43z" fill="#f7d3d3" />
        <path d="M1357 565V522a43 43 0 0 1 30.500 12.500z" fill="#fde3e3" />
        <path d="M1357 565l30.500-30.500a43 43 0 0 1 0 61z" fill={BLUE} />
        <path d="M1357 565l30.500 30.500A43 43 0 0 1 1314 565z" fill={PALE} />
      </Thumb>
      <Thumb box="690 678 249 186">
        {R(750, 729, 72, 12, BLUE)}
        {R(750, 753, 132, 12, BLUE)}
        {R(750, 777, 36, 12, BLUE)}
        {R(750, 801, 105, 12, BLUE)}
      </Thumb>
      <Thumb box="960 678 249 186">
        {R(1023, 729, 24, 21, BLUE)}
        {R(1023, 750, 24, 66, PALE)}
        {R(1056, 747, 24, 24, BLUE)}
        {R(1056, 771, 24, 45, PALE)}
        {R(1092, 738, 24, 57, BLUE)}
        {R(1092, 795, 24, 21, PALE)}
        {R(1128, 759, 24, 27, BLUE)}
        {R(1128, 786, 24, 30, PALE)}
      </Thumb>
      <Thumb box="1230 678 249 186">
        {R(1329, 711, 3, 120, "#eaeaea")}
        {R(1383, 711, 3, 120, "#eaeaea")}
        {R(1287, 789, 12, 42, BLUE)}
        {R(1302, 762, 12, 69, PALE)}
        {R(1344, 741, 12, 90, BLUE)}
        {R(1359, 774, 12, 57, PALE)}
        {R(1398, 801, 12, 30, BLUE)}
        {R(1413, 759, 12, 72, PALE)}
      </Thumb>
      <Thumb box="690 885 249 186">
        {R(750, 933, 63, 45, "#d8e5f0")}
        {R(750, 981, 63, 42, BLUE)}
        {R(816, 933, 33, 30, "#d8e5f0")}
        {R(852, 933, 30, 30, PALE)}
        {R(816, 966, 21, 30, "#ffe0dd")}
        {R(840, 966, 21, 30, "#d8e5f0")}
        {R(864, 966, 18, 30, PALE)}
        {R(816, 999, 21, 24, "#f9cfcd")}
        {R(840, 999, 21, 24, PALE)}
        {R(864, 999, 18, 12, BLUE)}
        {R(864, 1014, 18, 9, PALE)}
      </Thumb>
      <Thumb box="960 885 249 186">
        {circles([[1035, 949, 1], [1035, 963, 0], [1035, 1003, 0], [1088, 950, 0], [1088, 993, 0], [1088, 1005, 0], [1142, 949, 0], [1142, 972, 1], [1142, 1019, 1]])}
        <path d="M1075 1040a14 14 0 0 1 27 0" stroke={PALE} strokeWidth="3" />
      </Thumb>
      <Thumb box="1230 885 249 186">
        {smallCircles([[1299, 959, 1], [1299, 944, 0], [1328, 957, 0], [1328, 992, 1], [1299, 1015, 1], [1328, 1021, 0], [1388, 945, 1], [1416, 972, 1], [1416, 957, 0], [1388, 1015, 1], [1388, 1003, 0], [1416, 1009, 1]])}
        {R(1356, 918, 3, 120, "#eaeaea")}
      </Thumb>
      <Thumb box="90 72 249 186">
        <g strokeWidth="4">
          <path d="M146 156l22 6 35-25 50 41 34-7" stroke="#feeccc" />
          <path d="M149 137l19-17 35 44 29-22 22 19 33-15" stroke={PEACH} />
          <path d="M146 179l22 22 51-26 37 24 31-8" stroke={BLUE} />
        </g>
      </Thumb>
      <Thumb box="360 72 249 186">
        {R(486, 105, 3, 120, "#eaeaea")}
        <g strokeWidth="4">
          <path d="M414 174l22-3 20-22 20 13M497 174l19-7 21 5 21-11" stroke="#feeccc" />
          <path d="M414 153l22 5 18-20 22 2M497 153l20-23 18 14 23-5" stroke={PEACH} />
          <path d="M414 197l22 4 18-18h22M497 195l20-12 18 8 23-8" stroke={BLUE} />
        </g>
      </Thumb>
      <Thumb box="630 72 249 186">
        <path d="M686 117v93M829 117v93" stroke="#eaeaea" strokeWidth="9" strokeDasharray="3 15" />
        <g strokeWidth="4">
          <path d="M699 146l27-25 27 22 17-9 29 18 18-14" stroke={PEACH} />
          <path d="M699 172l27-12 26 30 18-10 29 14 18-23" stroke={BLUE} />
        </g>
      </Thumb>
      <Thumb box="90 279 249 186">
        <path d="M141 426V374l35-41 62 39 53-17v71z" fill={BLUE} />
        <path d="M141 426V380l35-24 62 42 53-33v61z" fill="#fee5c9" />
        <path d="M141 426V404l35-16 62 21 53-15v32z" fill="#fff4e6" />
      </Thumb>
      <Thumb box="360 279 249 186">
        <path d="M411 426V374l17-41 30 38 25-16v71zM489 426V374l17-41 30 38 25-16v71z" fill={BLUE} />
        <path d="M411 426V382l17-26 30 40 25-31v61zM489 426V382l17-26 30 40 25-31v61z" fill="#fee5c9" />
        <path d="M411 426V404l17-16 30 21 25-15v32zM489 426V404l17-16 30 21 25-15v32z" fill="#fff4e6" />
      </Thumb>
      <Thumb box="630 279 249 186">
        <path d="M686 324v93M829 324v93" stroke="#eaeaea" strokeWidth="9" strokeDasharray="3 15" />
        {R(702, 375, 15, 51, BLUE)}
        {R(726, 360, 15, 66, BLUE)}
        {R(750, 387, 15, 39, BLUE)}
        {R(774, 333, 15, 93, BLUE)}
        {R(798, 372, 15, 54, BLUE)}
        <path d="M705 365l27-26 25 36 26-24 27 24" stroke={PEACH} strokeWidth="4" />
      </Thumb>
      <Thumb box="90 486 249 186">
        <g stroke={PEACH} strokeWidth="3">
          <circle cx="198" cy="552" r="10.5" />
          <circle cx="261" cy="558" r="10.5" />
          <circle cx="174" cy="582" r="10.5" />
          <circle cx="207" cy="594" r="10.5" />
          <circle cx="156" cy="618" r="10.5" />
        </g>
        <path d="M225 538h27M238 525v26M213 571h27M226 558v26M258 589h27M271 576v26M171 610h27M184 597v26M225 607h27M238 594v26" stroke={MINT} strokeWidth="3" />
      </Thumb>
      <Thumb box="360 486 249 186">
        {[9, 24, 51, 81, 93, 81, 51, 24, 9].map((h, i) => R(420 + i * 15, 630 - h, 12, h, MINT))}
      </Thumb>
      <Thumb box="630 486 249 186">
        {R(693, 570, 21, 12, LMINT)}
        {R(693, 582, 21, 24, MINT)}
        {R(729, 555, 21, 27, LMINT)}
        {R(729, 582, 21, 15, MINT)}
        {R(765, 564, 21, 24, LMINT)}
        {R(765, 585, 21, 27, MINT)}
        {R(801, 549, 21, 36, LMINT)}
        {R(801, 585, 21, 15, MINT)}
        <path d="M696 547h15M696 616h15M703.5 547v69M732 541h15M732 622h15M739.5 541v81M768 538h15M768 625h15M775.5 538v87M804 532h15M804 628h15M811.5 532v96" stroke="#bcbcbc" strokeWidth="3" />
      </Thumb>
      <Thumb box="90 693 249 186">
        {R(144, 735, 27, 24, MINT)}
        {R(192, 735, 12, 24, PEACH)}
        {R(207, 735, 12, 24, LPEACH)}
        {R(240, 735, 6, 24, PEACH)}
        {R(258, 735, 24, 24, LPEACH)}
        {R(144, 771, 18, 24, LMINT)}
        {R(165, 771, 9, 24, MINT)}
        {R(186, 771, 12, 24, MINT)}
        {R(207, 771, 42, 24, LMINT)}
        {R(264, 771, 24, 24, PEACH)}
        {R(144, 810, 6, 24, MINT)}
        {R(159, 810, 24, 24, LPEACH)}
        {R(189, 810, 6, 24, PEACH)}
        {R(201, 810, 12, 24, LMINT)}
        {R(231, 810, 21, 24, MINT)}
        {R(270, 810, 12, 24, LPEACH)}
      </Thumb>
      <Thumb box="360 693 249 186">
        {R(417, 738, 120, 24, "#f6f6f6")}
        {R(537, 738, 18, 24, "#fbfbfb")}
        {R(417, 744, 75, 12, MINT)}
        {R(501, 738, 3, 24, "#bcbcbc")}
        {R(417, 774, 105, 24, "#f6f6f6")}
        {R(525, 774, 30, 24, "#fbfbfb")}
        {R(417, 780, 120, 12, MINT)}
        {R(522, 774, 3, 24, "#bcbcbc")}
        {R(417, 810, 75, 24, "#f6f6f6")}
        {R(492, 810, 63, 24, "#fbfbfb")}
        {R(417, 816, 63, 12, MINT)}
        {R(540, 810, 3, 24, "#bcbcbc")}
      </Thumb>
      <Thumb box="630 693 249 186">
        <circle cx="718" cy="806" r="29" fill={LMINT} />
        <circle cx="721" cy="764" r="11" fill={MINT} />
        <circle cx="750" cy="756" r="15.5" fill={MINT} />
        <circle cx="778" cy="759" r="9.5" fill={LMINT} />
        <circle cx="808" cy="773" r="20" fill={LPEACH} />
        <circle cx="764" cy="789" r="17" fill={LPEACH} />
        <circle cx="793" cy="805" r="11" fill={PEACH} />
        <circle cx="762" cy="823" r="12.5" fill={MINT} />
      </Thumb>
    </div>
  );
}

function ShowMe() {
  return (
    <div className="absolute right-[5px] top-[72px] flex w-[306px] flex-col items-end drop-shadow-[2px_3px_2px_rgba(0,0,0,0.35)]">
      <div className="relative z-10 -mb-px flex h-[55px] w-[151px] items-center border border-b-0 border-[#d8d8d8] bg-[#fafafa] pb-[8px] pl-[15px]">
        <svg viewBox="0 0 14 15" className="h-[15px] w-[14px]">
          <path d="M0 0h11v3H0z" fill="#8a6f9a" />
          <path d="M0 4h14v3H0z" fill="#7ba1cf" />
          <path d="M0 8h5v3H0z" fill="#f4a57c" />
          <path d="M0 12h8v3H0z" fill="#fb6f84" />
        </svg>
        <span className="ml-[8px] whitespace-nowrap pb-[2px] text-[19.5px] leading-none tracking-[1.3px] text-black [word-spacing:4px]">표현 방식</span>
      </div>
      <div className="h-[850px] w-[306px] border border-[#d8d8d8] bg-[#fafafa] pl-[20px] pt-[21px]">
        <ShowMeGrid />
        <div className={"mt-[28px] pl-px text-black " + TXT}>기호 맵의 경우 다음 시도:</div>
        <div className={"mt-[15px] flex h-[29px] items-center pl-px text-black " + TXT}>
          <span>1개의 지오</span>
          <span className="ml-[10px] mt-[3px]">
            <Globe color="#555" />
          </span>
          <Pill className="ml-[7px] w-[72px] bg-[#4a96b3] pl-[16px]">차원</Pill>
        </div>
        <div className={"mt-[12px] flex h-[29px] items-center pl-px text-black " + TXT}>
          <span className="w-[96px] pt-px">0개 이상의</span>
          <Pill className="w-[72px] bg-[#4a96b3] pl-[16px]">차원</Pill>
        </div>
        <div className={"mt-[12px] flex h-[29px] items-center pl-px text-black " + TXT}>
          <span className="w-[76px] pt-px">0~2개의</span>
          <Pill className="w-[90px] bg-[#00b180] pl-[16px]">측정값</Pill>
        </div>
        <div className="mt-[16px] whitespace-nowrap pl-px text-[18px] leading-[24px] tracking-[0.9px] text-[#7c7c7c] [word-spacing:2.8px]">
          지오 차원 대신 공간 측정값을
          <br />
          사용할 수 있습니다.
        </div>
      </div>
    </div>
  );
}

/* ---------- Top bars ---------- */

const Cyl = () => <path d="M6 5.500c0-2.200 9-2.200 9 0s-9 2.200-9 0v12c0 1.300 2 2.200 5 2.200M15 5.500v6" />;

function Toolbar() {
  return (
    <div className="flex h-[61px] items-center bg-[#f5f5f5] pb-[2px] pl-[23px]">
      <Ico>
        <path d="M12 4L3.500 12.500H6V20h4.500v-5h3v5H18v-7.500h2.500z" fill="#67717f" stroke="none" />
      </Ico>
      <Sep className="ml-[22px]" />
      <Ico className="ml-[20px]">
        <path d="M20 12H5M11 5.500L4.500 12l6.500 6.500" strokeWidth="1.9" />
      </Ico>
      <Ico className="ml-6">
        <path d="M4 12h15M13 5.500l6.500 6.500-6.500 6.500" strokeWidth="1.9" stroke="#b5b5b5" />
      </Ico>
      <Ico className="ml-[22px]">
        <path d="M16 9H7a3.500 3.500 0 0 0-3.500 3.500A3.500 3.500 0 0 0 7 15.500h10a3.500 3.500 0 0 0 3.500-3.500c0-1.500-.8-2.500-1.800-3M13.500 6l3.500 3-3.500 3" />
      </Ico>
      <Caret className="ml-[13px]" />
      <Ico className="ml-4">
        <path d="M4 4.500h15.500v15H4zM7.500 19.500v-5.500h8v5.500M10 16v3.500" />
      </Ico>
      <Ico className="ml-6">
        <Cyl />
        <path d="M15 13.500v8M11 17.500h8" strokeWidth="2" stroke="#333" />
      </Ico>
      <Ico className="ml-[22px]">
        <Cyl />
        <path d="M13.500 14.500v7.500M17 14.500v7.500" strokeWidth="2" stroke="#333" />
      </Ico>
      <Caret className="ml-[13px]" />
      <Ico className="ml-[14px]">
        <g stroke="#b5b5b5">
          <path d="M4.500 10A7.800 7.800 0 0 1 18 7M19.500 14A7.800 7.800 0 0 1 6 17M18.500 3v4.500H14M5.500 21v-4.500H10" />
        </g>
      </Ico>
      <Caret className="ml-[13px]" fill="#b5b5b5" />
      <Sep className="ml-[14px]" />
      <Ico className="ml-[18px]">
        <path d="M12 19.500H3.500V4H19v9M7.500 16v-4M11.500 16V7M15.500 13v-3" />
        <path d="M18 14v8M14 18h8" strokeWidth="2" stroke="#333" />
      </Ico>
      <Caret className="ml-[13px]" />
      <Ico className="ml-4">
        <path d="M10 10V3.500h10V13H10zM12.500 11V8.500M15 11V6M17.500 11V7M8 9.500H3.500V19h10v-4M6 17v-4M8.500 17v-4M11 17v-2" />
      </Ico>
      <Ico className="ml-[22px]">
        <path d="M12 19.500H4V4h15.500v9M8 16v-4M12 16V7M16 13v-3" />
        <path d="M14.500 15l6 6.500M20.500 15l-6 6.500" strokeWidth="2" stroke="#333" />
      </Ico>
      <Caret className="ml-[13px]" />
      <Sep className="ml-[14px]" />
      <Ico className="ml-[19px]">
        <path d="M4 4.500h3v3H4zM9.500 4.500h3v3h-3zM15 4.500h3v3h-3zM4 10h3v3H4zM4 15.500h3v3H4zM18.500 10c0 5-3 9-8 9M16 12l2.500-3 2.500 3M12.500 16.500L10 19l2.500 2.500" />
      </Ico>
      <Ico className="ml-[25px]">
        <g stroke="#b5b5b5">
          <path d="M5 4v15M2.500 16L5 19.500 7.500 16M10.500 4.500H14V8h-3.500zM10.500 10h6v3.500h-6zM10.500 15.500h9V19h-9z" />
        </g>
      </Ico>
      <Ico className="ml-6">
        <g stroke="#b5b5b5">
          <path d="M5 4v15M2.500 16L5 19.500 7.500 16M10.500 4.500h9V8h-9zM10.500 10h6v3.500h-6zM10.500 15.500H14V19h-3.500z" />
        </g>
      </Ico>
      <Sep className="ml-[22px]" />
      <Ico className="ml-5">
        <path d="M14 3.500l3 1.500-4.500 10.500-3.500 2.500.2-4.500zM9 13.500l3.200 1.800" />
        <path d="M6 20.500h12" strokeWidth="2" />
      </Ico>
      <Caret className="ml-[9px]" />
      <Ico className="ml-4">
        <path
          d="M9.500 14.500l4-8c1-1.800 3.500-.6 2.600 1.300l-5 10c-1.600 3-5.800 1-4.400-2.200l5-10C13.500 2 19 4 17.300 8.200l-4 8"
          transform="translate(1.200 1.600) scale(0.9)"
          strokeWidth="1.1"
        />
      </Ico>
      <Caret className="ml-3" />
      <Ico className="ml-[18px]">
        <rect x="4" y="4.5" width="16" height="15" strokeDasharray="2.5 1.5" stroke="#999" />
        <path d="M9 10V8.500h6V10M12 8.500V16M10.500 16h3" />
      </Ico>
      <Ico className="ml-[22px]">
        <path d="M12.500 4l5.500 3-1.800 1-1.500 5 .3 3.500-8.500-4.500 3-1.200L12.700 7zM10 14.500l-1.500 6" />
      </Ico>
      <div className="ml-[27px] mt-[2px] flex h-[34px] w-[155px] shrink-0 items-center justify-end rounded-[2px] border border-[#d0d0d0] pr-[8px]">
        <svg viewBox="0 0 8 8" className="h-[9px] w-[9px]">
          <path d="M1 2h6L4 6z" fill="#cfcfcf" />
        </svg>
      </div>
      <Sep className="ml-[21px]" />
      <Ico className="ml-[21px]">
        <path d="M2.500 5h3v3h-3zM2.500 10.500h3v3h-3zM2.500 16h3v3h-3zM8 5h13v14H8z" />
        <path d="M12 17v-4M15 17V8.500M18 17v-6" strokeWidth="1.8" />
      </Ico>
      <Caret className="ml-2" />
      <Ico className="ml-[18px]">
        <path d="M3.500 5.500h17" strokeWidth="2" />
        <path d="M5 6v8.500h14V6M12 14.500v5.500M8.500 20h7M12 3v2" />
      </Ico>
      <Sep className="ml-[23px]" />
      <Ico className="ml-5">
        <circle cx="7.500" cy="12" r="2.800" />
        <circle cx="15.500" cy="6.500" r="2.500" />
        <circle cx="15.500" cy="17.500" r="2.500" />
        <path d="M9.800 10.400l3.600-2.500M9.800 13.600l3.600 2.500" />
      </Ico>
      <Ico className="ml-[336px]">
        <path d="M3.500 5.500H17l3.500 3.200L17 12H3.500zM12 3v2.500M12 12v8.500M9 20.500h6" />
      </Ico>
    </div>
  );
}

const MENU: [string, string][] = [
  ["파일(F)", "w-[71px]"],
  ["데이터(D)", "w-[93px]"],
  ["워크시트(W)", "w-[116px]"],
  ["대시보드(B)", "w-[108px]"],
  ["스토리(T)", "w-[89px]"],
  ["분석(A)", "w-[75px]"],
  ["맵(M)", "w-[61px]"],
  ["서식(O)", "w-[76px]"],
  ["서버(S)", "w-[72px]"],
  ["창(N)", "w-[58px]"],
  ["도움말(H)", "w-[90px]"],
];

function TitleBar() {
  return (
    <>
      <div className="flex h-[34px] items-center bg-[#f3f3f3] pl-[3px]">
        <svg viewBox="0 0 22 22" className="h-[22px] w-[22px]">
          <rect x="1.5" y="1.5" width="20" height="20" fill="#b5b5b5" />
          <rect x="0.5" y="0.5" width="20" height="20" fill="#fff" stroke="#cfcfcf" />
          <path d="M10.500 7v7M7 10.500h7M10.500 2v3M9 3.500h3M10.500 16v3M9 17.500h3M5 5v3M3.500 6.500h3M16 5v3M14.500 6.500h3M5 13v3M3.500 14.500h3M16 13v3M14.500 14.500h3M2.500 9.500v2M18.500 9.500v2" stroke="#3a87b5" strokeWidth="1.300" />
        </svg>
        <span className="ml-[7px] whitespace-nowrap pb-[2px] text-[18px] leading-none tracking-[0.42px] text-[#8b8b8b] [word-spacing:1px]">
          Tableau - 태블로 따라하기 지도 그래프 드릴다운 - 13일 후 Tableau 라이선스 만료
        </span>
        <svg viewBox="0 0 16 16" className="ml-auto h-4 w-4" stroke="#888">
          <path d="M1 8.500h14" />
        </svg>
        <svg viewBox="0 0 16 16" className="ml-[53px] h-4 w-4" fill="none" stroke="#777" strokeWidth="1.200">
          <rect x="1.500" y="4" width="10.500" height="10.500" rx="2" />
          <path d="M4.500 1.800H12a2.500 2.500 0 0 1 2.500 2.500v7" />
        </svg>
        <svg viewBox="0 0 16 16" className="ml-[55px] mr-[29px] h-4 w-4" stroke="#777" strokeWidth="1.200">
          <path d="M1 1l14 14M15 1L1 15" />
        </svg>
      </div>
      <div className="flex h-[30px] items-center bg-white pl-[8px]">
        {MENU.map(([t, w]) => (
          <span key={t} className={"shrink-0 whitespace-nowrap text-[17.5px] leading-none tracking-[0.6px] text-[#9a9a9a] " + w}>
            {t}
          </span>
        ))}
      </div>
    </>
  );
}

/* ---------- Bottom bars ---------- */

function NewTab({ children }: { children: React.ReactNode }) {
  return (
    <div className="flex h-full w-8 items-center justify-center border-r border-[#cfcfcf] pl-[2px]">
      <svg viewBox="0 0 16 16" className="h-[17px] w-[17px]" fill="none" stroke="#666" strokeWidth="1.100">
        {children}
        <path d="M12 8v7.500M8.300 11.700h7.500" strokeWidth="2" />
      </svg>
    </div>
  );
}

function BottomBars() {
  return (
    <>
      <div className="flex h-[45px] items-center border-t border-[#cfcfcf] bg-[#e6e6e6] text-[#555]">
        <div className={"flex h-full w-[196px] items-center border-r border-[#cfcfcf] pb-px pl-[12px] " + TXT}>
          <svg viewBox="0 0 10 12" className="mr-[7px] mt-px h-[12px] w-[10px]" fill="none" stroke="#666" strokeWidth="1.100">
            <rect x="1" y="0.700" width="8" height="10.600" rx="2.500" />
            <path d="M1 3.500c1.500 1 6.500 1 8 0" />
          </svg>
          데이터 원본
        </div>
        <div className={"flex h-full w-[195px] items-center whitespace-nowrap border-r border-[#cfcfcf] bg-[#fafafa] pb-[2px] pl-[9px] " + TXT}>
          지도 그래프 드릴다운
        </div>
        <div className={"flex h-full w-[72px] items-center justify-center whitespace-nowrap border-r border-[#cfcfcf] pb-[2px] " + TXT}>시트 2</div>
        <NewTab>
          <path d="M7 11.500H1V1h10v6M4 9V6.500M6 9V4.500M8.500 6v-1" />
        </NewTab>
        <NewTab>
          <path d="M7 11.500H1V1h10v6M1 6h10M6 1v10.500" />
        </NewTab>
        <NewTab>
          <path d="M7 11L4.500 9.500 1 11.500V1.500L4.500 3 7.500 1.500 11.500 1v6M4.500 3v6.500" />
        </NewTab>
      </div>
      <div className="flex h-[31px] items-center border-t border-[#d4d4d4] bg-[#ebebeb] text-[15.5px] leading-none tracking-[0.4px] text-black [word-spacing:2.500px]">
        <span className="w-[126px] pl-[4px]">1/29개 마크</span>
        <span className="w-[57px] pl-[4px]">행 1개</span>
        <span className="w-[23px] pl-[4px]">x</span>
        <span className="w-[60px]">열 1개</span>
        <div className="ml-auto h-full w-[190px] border-l border-[#cfcfcf]" />
        <div className="h-full w-[39px] border-l border-[#cfcfcf]" />
        <div className="h-full w-[39px] border-l border-[#cfcfcf]" />
        <div className="h-full w-[69px] border-l border-[#cfcfcf]" />
        <div className="flex h-full w-[73px] items-center border-l border-[#cfcfcf] pl-[9px]">
          <svg viewBox="0 0 54 8" className="h-2 w-[54px]" fill="#b5b5b5">
            <path d="M0 0.500h1.200v7H0zM6 0.500v7L2 4zM21 0.500v7L17 4zM33 0.500v7L37 4zM48 0.500v7L52 4zM52.800 0.500H54v7h-1.200z" />
          </svg>
        </div>
        <div className="flex h-full w-[74px] items-center border-l border-[#cfcfcf] pl-[10px]">
          <svg viewBox="0 0 57 11" className="h-[11px] w-[57px]" fill="#b5b5b5">
            <path d="M0 0h3v3H0zM4 0h3v3H4zM8 0h3v3H8zM0 4h3v3H0zM4 4h3v3H4zM8 4h3v3H8zM0 8h3v3H0zM4 8h3v3H4zM8 8h3v3H8zM23 0h11v7H23zM23 8h3v3h-3zM27 8h3v3h-3zM31 8h3v3h-3z" />
            <path d="M46 0h11v11H46z" fill="#5f5f5f" />
          </svg>
        </div>
      </div>
    </>
  );
}

export default function App() {
  return (
    <div className="relative flex h-[1008px] w-[1920px] flex-col overflow-hidden bg-[#f5f5f5] font-['Noto_Sans_CJK_KR',sans-serif] font-light">
      <TitleBar />
      <Toolbar />
      <div className="flex h-[807px]">
        <LeftPane />
        <Cards />
        <div className="ml-2 flex min-w-0 flex-1 flex-col gap-2">
          <Shelf
            label="열"
            pill="경도(생성됨)"
            icon={
              <svg viewBox="0 0 12 12" className="h-3 w-3" stroke="#444" strokeWidth="1.600">
                <path d="M2 0v2M6 0v2M10 0v2M2 3.500V12M6 3.500V12M10 3.500V12" />
              </svg>
            }
          />
          <Shelf
            label="행"
            pill="위도(생성됨)"
            icon={
              <svg viewBox="0 0 12 12" className="h-3 w-3" stroke="#444" strokeWidth="1.600">
                <path d="M0 2h2M0 6h2M0 10h2M3.500 2H12M3.500 6H12M3.500 10H12" />
              </svg>
            }
          />
          <div className="h-[705px] border border-r-0 border-[#d4d4d4] bg-white pl-[8px]">
            <div className="flex h-[64px] items-center pl-[6px] pt-[4px] text-[28px] leading-none tracking-[2.5px] text-[#333] [word-spacing:5.500px]">
              지도 그래프 드릴다운
            </div>
            <div className="relative h-[631px] w-[1045px] border border-[#e0e0e0]">
              <MapView />
              <div className="absolute bottom-[2px] left-[2px] bg-[#fafafa]/90 px-[3px] font-['Liberation_Sans',sans-serif] text-[16.500px] font-normal leading-[21px] tracking-[-0.300px] text-[#666]">
                © 2024 Mapbox © OpenStreetMap
              </div>
            </div>
          </div>
        </div>
      </div>
      <BottomBars />
      <ShowMe />
    </div>
  );
}
